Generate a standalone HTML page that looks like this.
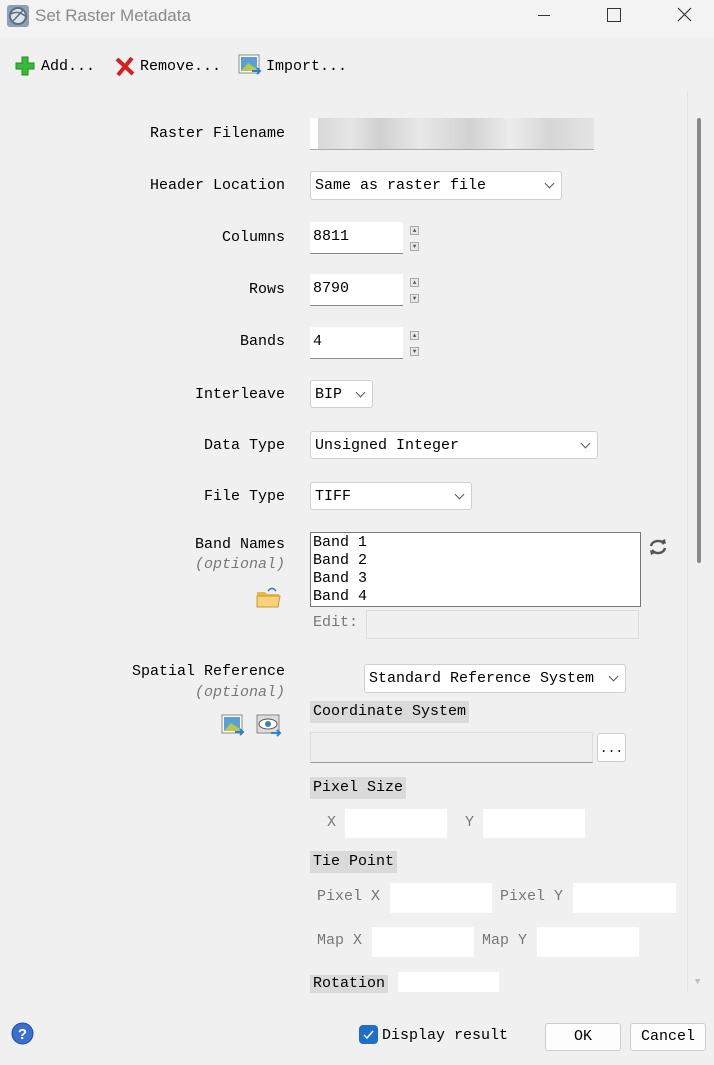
<!DOCTYPE html>
<html><head><style>
body{margin:0;width:714px;height:1065px;background:#f0f0f0;position:relative;overflow:hidden;font-family:"Liberation Mono",monospace;font-size:15px;color:#000}
.a{position:absolute}
.lbl{position:absolute;right:429px;white-space:nowrap}
.in{position:absolute;background:#fff;border-bottom:1px solid #8a8a8a;box-sizing:border-box}
.cb{position:absolute;background:#fff;border:1px solid #cfcfcf;border-radius:3px;box-sizing:border-box;padding-left:4px;line-height:27px}
.cb:after{content:"";position:absolute;right:8px;top:8px;width:6px;height:6px;border-right:1.3px solid #555;border-bottom:1.3px solid #555;transform:rotate(45deg)}
.sp{position:absolute;width:9px;height:9px;border:1px solid #aaa;background:#e8e8e8;box-sizing:border-box;font-size:6px;line-height:7px;text-align:center;color:#555}
.hd{position:absolute;background:#dadada;padding:0 3px;line-height:22px}
.g{color:#777}
</style></head><body>
<div class="a" style="left:0;top:0;width:714px;height:38px;background:#f3f3f3"></div>
<svg class="a" style="left:6px;top:4px" width="24" height="24"><rect x="1" y="1" width="22" height="22" rx="3" fill="#8fa0b3"/><circle cx="12" cy="12" r="8" fill="#dfe4ea" stroke="#5d6e80" stroke-width="2"/><path d="M5 10 Q12 6 19 12 M7 17 Q12 12 17 6" stroke="#5d6e80" stroke-width="1.5" fill="none"/></svg>
<div class="a" style="left:35px;top:6px;font-family:'Liberation Sans',sans-serif;font-size:17px;color:#8a8a8a">Set Raster Metadata</div>
<div class="a" style="left:538px;top:15px;width:12px;height:1px;background:#333"></div>
<div class="a" style="left:607px;top:8px;width:12px;height:12px;border:1px solid #333"></div>
<svg class="a" style="left:677px;top:7px" width="15" height="15"><path d="M1 1L14 14M14 1L1 14" stroke="#333" stroke-width="1.2"/></svg>

<svg class="a" style="left:14px;top:55px" width="22" height="22"><path d="M8 2h6v6h6v6h-6v6h-6v-6h-6v-6h6z" fill="#3cb93c" stroke="#1f8a1f"/></svg>
<div class="a" style="left:41px;top:58px">Add...</div>
<svg class="a" style="left:114px;top:55px" width="22" height="22"><path d="M3 4L19 19M18 3L4 20" stroke="#d42020" stroke-width="4"/></svg>
<div class="a" style="left:140px;top:58px">Remove...</div>
<svg class="a" style="left:238px;top:53px" width="24" height="24"><rect x="1" y="2" width="20" height="18" fill="#fff" stroke="#888"/><rect x="3" y="4" width="16" height="14" fill="#5aa0d8"/><path d="M3 18L10 10L19 16V18Z" fill="#b8c84a"/><path d="M14 18h8M19 15l3 3-3 3" stroke="#2d7fd6" stroke-width="2" fill="none"/></svg>
<div class="a" style="left:266px;top:58px">Import...</div>

<div class="a" style="left:687px;top:92px;width:1px;height:900px;background:#e2e2e2"></div>
<div class="a" style="left:697px;top:118px;width:4px;height:445px;background:#888;border-radius:2px"></div>
<div class="a" style="left:695px;top:977px;font-size:9px;color:#bbb">▼</div>

<div class="lbl" style="top:125px">Raster Filename</div>
<div class="in" style="left:310px;top:118px;width:284px;height:32px;background:linear-gradient(90deg,#fff 0,#fff 8px,#d8d8d8 8px,#e6e6e6 40px,#d0d0d0 70px,#e8e8e8 110px,#d2d2d2 160px,#ececec 200px,#d6d6d6 240px,#e4e4e4 284px);border-bottom-color:#aaa"></div>
<div class="lbl" style="top:177px">Header Location</div>
<div class="cb" style="left:310px;top:171px;width:252px;height:29px">Same as raster file</div>
<div class="lbl" style="top:229px">Columns</div>
<div class="in" style="left:310px;top:222px;width:93px;height:32px;padding:6px 3px">8811</div>
<div class="sp" style="left:410px;top:226px">▲</div><div class="sp" style="left:410px;top:242px">▼</div>
<div class="lbl" style="top:281px">Rows</div>
<div class="in" style="left:310px;top:274px;width:93px;height:32px;padding:6px 3px">8790</div>
<div class="sp" style="left:410px;top:278px">▲</div><div class="sp" style="left:410px;top:294px">▼</div>
<div class="lbl" style="top:333px">Bands</div>
<div class="in" style="left:310px;top:327px;width:93px;height:32px;padding:6px 3px">4</div>
<div class="sp" style="left:410px;top:331px">▲</div><div class="sp" style="left:410px;top:347px">▼</div>
<div class="lbl" style="top:386px">Interleave</div>
<div class="cb" style="left:310px;top:380px;width:63px;height:28px">BIP</div>
<div class="lbl" style="top:437px">Data Type</div>
<div class="cb" style="left:310px;top:431px;width:288px;height:28px">Unsigned Integer</div>
<div class="lbl" style="top:488px">File Type</div>
<div class="cb" style="left:310px;top:482px;width:162px;height:28px">TIFF</div>
<div class="lbl" style="top:536px">Band Names</div>
<div class="lbl g" style="top:556px;font-style:italic">(optional)</div>
<svg class="a" style="left:256px;top:586px" width="25" height="23"><path d="M1 6h8l2 2h12v13H1z" fill="#e8b94a"/><path d="M1 10h23l-2 11H1z" fill="#f6d27a" stroke="#c99a2e"/><path d="M12 5q4-5 8 0" stroke="#3b6fa8" stroke-width="1.5" fill="none"/></svg>
<div class="a" style="left:310px;top:532px;width:331px;height:75px;background:#fff;border:1px solid #777;box-sizing:border-box;line-height:18px;padding-left:2px;padding-top:1px">Band 1<br>Band 2<br>Band 3<br>Band 4</div>
<svg class="a" style="left:647px;top:537px" width="22" height="20"><path d="M4 9a7 6 0 0 1 13-2M18 11a7 6 0 0 1-13 2" stroke="#555" stroke-width="2.5" fill="none"/><path d="M14 4l5 3-1-5zM8 16l-5-3 1 5z" fill="#555"/></svg>
<div class="a g" style="left:313px;top:614px">Edit:</div>
<div class="a" style="left:366px;top:610px;width:273px;height:29px;border:1px solid #ddd;box-sizing:border-box"></div>

<div class="lbl" style="top:663px">Spatial Reference</div>
<div class="lbl g" style="top:684px;font-style:italic">(optional)</div>
<svg class="a" style="left:221px;top:713px" width="24" height="24"><rect x="1" y="2" width="20" height="18" fill="#fff" stroke="#888"/><rect x="3" y="4" width="16" height="14" fill="#5aa0d8"/><path d="M3 18L10 10L19 16V18Z" fill="#b8c84a"/><path d="M14 19h8M19 16l3 3-3 3" stroke="#2d7fd6" stroke-width="2" fill="none"/></svg>
<svg class="a" style="left:256px;top:713px" width="26" height="24"><rect x="1" y="2" width="22" height="18" fill="#ddd" stroke="#888"/><ellipse cx="12" cy="11" rx="9" ry="5" fill="#fff" stroke="#555"/><circle cx="12" cy="11" r="3" fill="#3a7fc0"/><path d="M15 20h9M21 17l3 3-3 3" stroke="#2d7fd6" stroke-width="2" fill="none"/></svg>
<div class="cb" style="left:364px;top:664px;width:262px;height:29px">Standard Reference System</div>
<div class="hd" style="left:310px;top:701px">Coordinate System</div>
<div class="a" style="left:310px;top:732px;width:283px;height:31px;background:#eee;border:1px solid #ddd;border-bottom-color:#999;box-sizing:border-box"></div>
<div class="a" style="left:597px;top:733px;width:29px;height:29px;background:#fdfdfd;border:1px solid #ccc;border-radius:3px;box-sizing:border-box;text-align:center;line-height:30px;font-size:13px">...</div>
<div class="hd" style="left:310px;top:777px">Pixel Size</div>
<div class="a g" style="left:327px;top:814px">X</div>
<div class="a" style="left:345px;top:809px;width:102px;height:29px;background:#fff"></div>
<div class="a g" style="left:465px;top:814px">Y</div>
<div class="a" style="left:483px;top:809px;width:102px;height:29px;background:#fff"></div>
<div class="hd" style="left:310px;top:851px">Tie Point</div>
<div class="a g" style="left:317px;top:888px">Pixel X</div>
<div class="a" style="left:390px;top:883px;width:102px;height:30px;background:#fff"></div>
<div class="a g" style="left:500px;top:888px">Pixel Y</div>
<div class="a" style="left:573px;top:883px;width:103px;height:30px;background:#fff"></div>
<div class="a g" style="left:317px;top:932px">Map X</div>
<div class="a" style="left:372px;top:927px;width:102px;height:30px;background:#fff"></div>
<div class="a g" style="left:482px;top:932px">Map Y</div>
<div class="a" style="left:537px;top:927px;width:102px;height:30px;background:#fff"></div>
<div class="hd" style="left:310px;top:975px;line-height:18px">Rotation</div>
<div class="a" style="left:398px;top:972px;width:101px;height:20px;background:#fff"></div>

<svg class="a" style="left:11px;top:1022px" width="23" height="23"><circle cx="11.5" cy="11.5" r="10.5" fill="#3a6fd0" stroke="#1d4aa0"/><text x="11.5" y="17" font-family="Liberation Sans" font-weight="bold" font-size="15" fill="#fff" text-anchor="middle">?</text></svg>
<div class="a" style="left:359px;top:1025px;width:19px;height:19px;background:#1f6fc8;border-radius:4px"></div>
<svg class="a" style="left:362px;top:1028px" width="13" height="13"><path d="M2 7l3 3 6-7" stroke="#fff" stroke-width="1.5" fill="none"/></svg>
<div class="a" style="left:382px;top:1027px">Display result</div>
<div class="a" style="left:545px;top:1023px;width:76px;height:28px;background:#fdfdfd;border:1px solid #ccc;border-radius:3px;box-sizing:border-box;text-align:center;line-height:26px">OK</div>
<div class="a" style="left:630px;top:1023px;width:76px;height:28px;background:#fdfdfd;border:1px solid #ccc;border-radius:3px;box-sizing:border-box;text-align:center;line-height:26px">Cancel</div>
</body></html>
